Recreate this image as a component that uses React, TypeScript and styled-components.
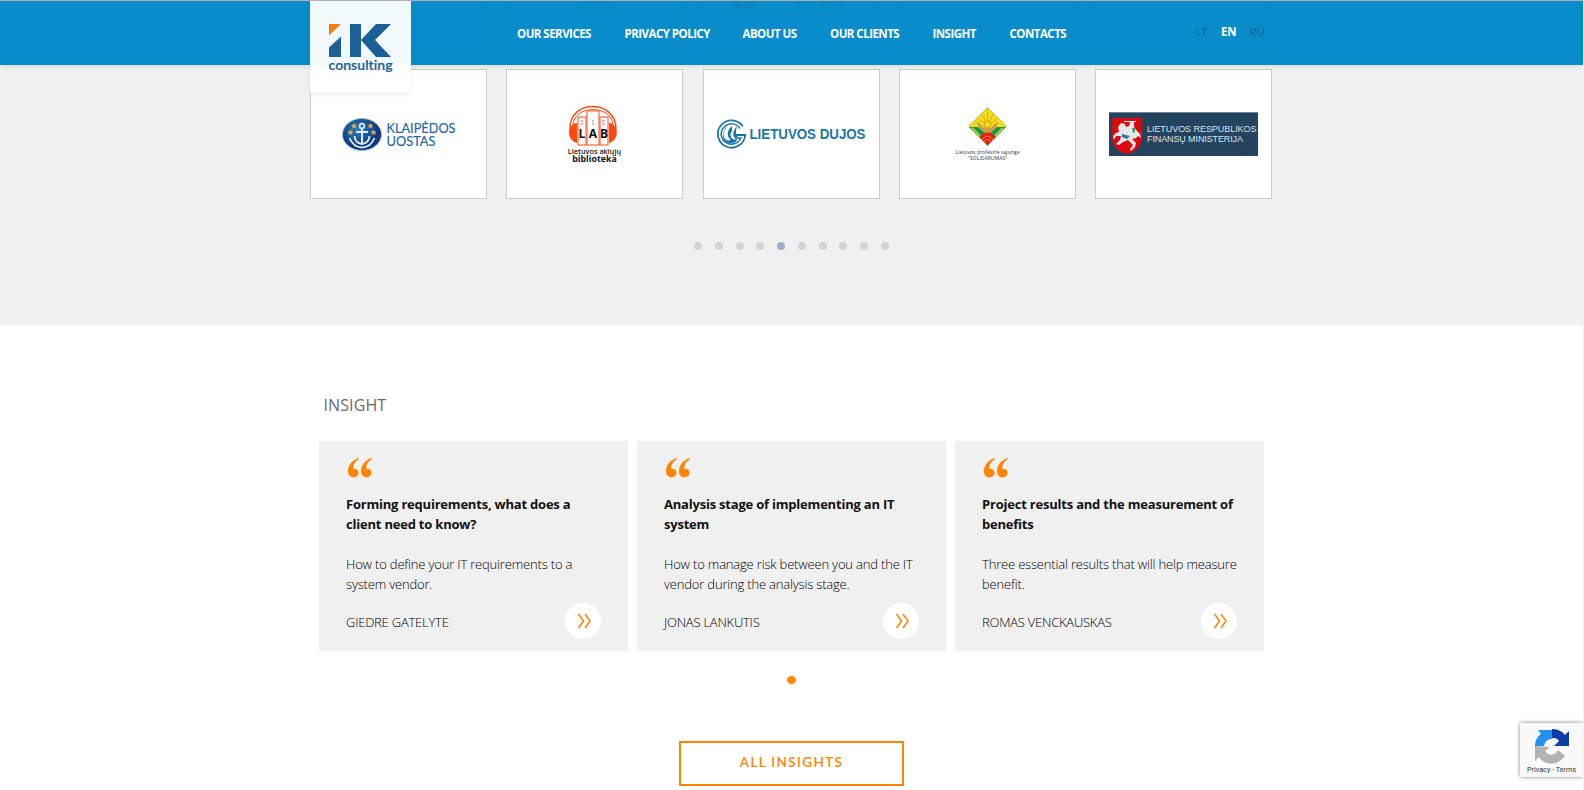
import React from "react";
import styled, { createGlobalStyle } from "styled-components";

const Global = createGlobalStyle`
  * { box-sizing: border-box; }
  body { margin: 0; background: #fff; font-family: "Open Sans", sans-serif; overflow: hidden; }
  h2, h3, p { margin: 0; }
  a { color: inherit; text-decoration: none; }
`;

const Page = styled.div`
  width: 1584px;
  height: 790px;
  overflow: hidden;
  border-top: 1px solid #b0b0b0;
  border-right: 1px solid #f1f1f1;
  display: flex;
  flex-direction: column;
`;

const Header = styled.header`
  position: relative;
  z-index: 2;
  height: 64px;
  flex: none;
  background: #098dca;
  box-shadow: 0 0 6px rgba(0, 0, 0, 0.13);
  padding-left: 310px;
  display: flex;
  align-items: flex-start;
`;

const ScrolledRow = styled.svg`
  position: absolute;
  left: 310px;
  top: 0;
  opacity: 0.06;
`;

const LogoBox = styled.a`
  position: relative;
  width: 101px;
  height: 91px;
  flex: none;
  background: linear-gradient(#f1f9fd 64px, #fff 64px);
  box-shadow: 0 2px 5px rgba(0, 0, 0, 0.07);
`;

const Nav = styled.nav`
  display: flex;
  gap: 34px;
  margin-left: 106px;
  padding-top: 23px;
  color: #fff;
  font-size: 11.5px;
  line-height: 20px;
  font-weight: 700;
  white-space: nowrap;
`;

const NavLink = styled.a<{ $w: number }>`
  width: ${(p) => p.$w}px;
  letter-spacing: -0.52px;
`;

const Languages = styled.div`
  display: flex;
  margin-left: 130px;
  padding-top: 21px;
  font-size: 11.5px;
  line-height: 20px;
`;

const Language = styled.a<{ $active?: boolean; $w: number }>`
  width: ${(p) => p.$w}px;
  letter-spacing: -0.1px;
  color: ${(p) => (p.$active ? "#fff" : "#1c5f9c")};
  font-weight: ${(p) => (p.$active ? 700 : 400)};
`;

const Clients = styled.section`
  height: 260px;
  flex: none;
  background: #f0f0f0;
  padding: 4px 0 0 310px;
`;

const ClientRow = styled.div`
  display: grid;
  grid-template-columns: repeat(5, 177px);
  gap: 19.25px;
`;

const ClientCard = styled.div`
  height: 130px;
  background: #fff;
  border: 1px solid #ccc;
  svg { display: block; }
`;

const Dots = styled.div`
  display: flex;
  gap: 12.75px;
  margin: 43px 0 0 384px;
`;

const Dot = styled.span<{ $active?: boolean }>`
  width: 8px;
  height: 8px;
  border-radius: 50%;
  background: ${(p) => (p.$active ? "#a0aecb" : "#d3d3d3")};
`;

const Insights = styled.section`
  display: flex;
  flex-direction: column;
  padding: 67px 0 0 319px;
`;

const Heading = styled.h2`
  font-size: 16px;
  line-height: 26px;
  font-weight: 400;
  color: #6a6a6a;
  padding-left: 4.5px;
  letter-spacing: 0.1px;
`;

const InsightRow = styled.div`
  display: grid;
  grid-template-columns: repeat(3, 309px);
  gap: 9px;
  margin-top: 23px;
`;

const Card = styled.article`
  height: 210px;
  background: #f0f0f0;
  padding: 17px 27px 0;
  font-size: 13px;
  line-height: 20px;
  color: #111;
`;

const QuoteIcon = styled.svg`
  display: block;
  margin-left: 2.4px;
`;

const CardTitle = styled.h3`
  font-size: 13px;
  font-weight: 700;
  letter-spacing: -0.21px;
  height: 40px;
  margin-top: 16px;
  white-space: nowrap;
`;

const CardText = styled.p`
  font-weight: 300;
  color: #000;
  letter-spacing: -0.18px;
  height: 40px;
  margin-top: 20px;
  white-space: nowrap;
`;

const CardFooter = styled.div`
  display: flex;
  justify-content: space-between;
  align-items: center;
  height: 36px;
  margin-top: 9px;
  font-weight: 300;
  color: #000;
`;

const Author = styled.span`
  letter-spacing: -0.23px;
  padding-top: 2px;
`;

const More = styled.a`
  width: 36px;
  height: 36px;
  border-radius: 50%;
  background: #fff;
  display: flex;
  align-items: center;
  justify-content: center;
`;

const Pager = styled.span`
  width: 9px;
  height: 8px;
  border-radius: 50%;
  background: #ff8400;
  margin: 25px 0 0 468px;
`;

const AllButton = styled.a`
  width: 225px;
  height: 45px;
  margin: 57px 0 0 360px;
  border: 2px solid #ff8400;
  color: #ff8400;
  font: 600 13.5px/38px Lato, sans-serif;
  letter-spacing: 1.35px;
  text-align: center;
`;

const Captcha = styled.aside`
  position: absolute;
  left: 1520px;
  top: 723px;
  width: 63px;
  height: 54px;
  background: #f9f9f9;
  border-radius: 2px 0 0 2px;
  box-shadow: 0 0 4px #808080;
  clip-path: inset(-8px 0 -8px -8px);
`;

const Logo = () => (
  <svg width="101" height="91" viewBox="0 0 101 91">
    <path d="M19 23H31L19 34.5Z" fill="#f08010" />
    <path d="M31 35.5V56H19V46.5ZM40 23H51V56H40ZM51 39 66 23H81L65 39 81 56H66Z" fill="#1c6098" />
    <text x="18.5" y="69" fontFamily="Lato" fontWeight="600" fontSize="14" fill="#1c6098" stroke="#1c6098" strokeWidth=".2" textLength="64" style={{ fontVariantLigatures: "none" }}>consulting</text>
  </svg>
);

const HiddenClients = () => (
  <ScrolledRow width="963" height="50" viewBox="0 0 963 50">
    <g fill="none" stroke="#333">
      {[0, 196, 393, 589, 785].map((x) => <path key={x} d={`M${x + 0.5} 0V49.500H${x + 176.5}V0`} strokeWidth=".6" />)}
      <path d="M424 0C427 8 441 8 446 0" strokeWidth="5" />
    </g>
    <g fill="#111" fontFamily="Liberation Sans">
      <text x="271" y="9.500" fontSize="7" textLength="29">CENTRAS</text>
      <text x="483" y="3" fontSize="18" fontWeight="700" textLength="50">LCVA</text>
      <text x="423" y="15" fontSize="5" textLength="113">LIETUVOS CENTRINIS VALSTYBĖS ARCHYVAS</text>
    </g>
  </ScrolledRow>
);

const star = (x: number, y: number) => (
  <path key={`${x}-${y}`} transform={`translate(${x} ${y})`} fill="#f2b34a" stroke="#f2b34a" strokeWidth=".5" d="M0-2.5.7-.8 2.5-.8 1.1.4 1.6 2.2 0 1.1-1.6 2.2-1.1.4-2.5-.8-.7-.8Z" />
);

const Klaipeda = () => (
  <svg width="175" height="128" viewBox="0 0 175 128">
    <defs>
      <radialGradient id="port" cx=".4" cy=".35"><stop offset="0" stopColor="#2f7fc0" /><stop offset="1" stopColor="#0c3a7c" /></radialGradient>
    </defs>
    <ellipse cx="51" cy="64.5" rx="19.5" ry="16" fill="url(#port)" stroke="#9ab8d6" />
    <g fill="none" stroke="#dfe9f3" strokeWidth="2">
      <circle cx="51" cy="56" r="2.4" strokeWidth="1.6" />
      <path d="M51 59V74M45 62H57M43.5 66Q44 73 51 74Q58 73 58.5 66" />
      <path d="M38.5 68Q42 77 51 77.500Q60 77 63.500 68" strokeWidth="1.8" />
    </g>
    {[[43, 56], [59.5, 56], [39.5, 62.5], [62.5, 62.5]].map(([x, y]) => star(x, y))}
    <g fontFamily="Lato" fontSize="13" fill="#1d64a8" stroke="#1d64a8" strokeWidth=".15">
      <text x="75.500" y="63" textLength="69" lengthAdjust="spacingAndGlyphs">KLAIPĖDOS</text>
      <text x="75.500" y="76" textLength="49" lengthAdjust="spacingAndGlyphs">UOSTAS</text>
    </g>
  </svg>
);

const Library = () => (
  <svg width="175" height="128" viewBox="0 0 175 128">
    <g fill="none" stroke="#fa4a12">
      <path d="M63 59C62 29 109 29 109 59" strokeWidth="1.4" />
      <path d="M66 55C67 34.500 105 34.500 106 55" />
    </g>
    <path d="M70 53C60 54 59 70 70 73ZM102 53C112 54 113 70 102 73Z" fill="#fa4a12" />
    <g fill="#fff" stroke="#fa6a3c" strokeWidth="1.200">
      <rect x="71" y="47" width="8" height="28" /><rect x="80" y="41" width="12" height="34" /><rect x="93" y="47" width="8" height="28" />
    </g>
    <path d="M73.500 51h3M73.500 54h3M85 51h2M85 54h2M95 51h3M95 54h3" stroke="#888" />
    <g fontFamily="Open Sans" fontWeight="700" fill="#111" textAnchor="middle">
      <text x="75" y="68" fontSize="12">L</text><text x="86" y="68" fontSize="12">A</text><text x="97" y="68" fontSize="12">B</text>
      <text fontSize="7.300">
        <tspan x="87.500" y="84" fontWeight="600">Lietuvos aklųjų</tspan>
        <tspan x="87.500" y="92" fontSize="8.800">biblioteka</tspan>
      </text>
    </g>
  </svg>
);

const Dujos = () => (
  <svg width="175" height="128" viewBox="0 0 175 128">
    <g fill="none" stroke="#1c75a8">
      <path d="M38.800 56.200A13.700 13.700 0 1 0 41.200 65H31" strokeWidth="1.800" />
      <path d="M36 58.500A10.200 10.200 0 1 0 36.800 68H31" strokeWidth="1.500" />
    </g>
    <path d="M28 56C22 61 23 67 27 70C22 72 18 67 20 62C21 59 23 58 23 56C19 61 17 67 21 71C26 75 33 73 33 69C27 71 25 65 28 61ZM33 56C29 61 28 65 31 68L34 67C31 64 32 60 33 56Z" fill="#1c75a8" />
    <text x="45.500" y="69" fontFamily="Liberation Sans" fontWeight="700" fontSize="14" fill="#1c75a8" textLength="116" lengthAdjust="spacingAndGlyphs">LIETUVOS DUJOS</text>
  </svg>
);

const Solidarumas = () => (
  <svg width="175" height="128" viewBox="0 0 175 128">
    <defs><clipPath id="diamond"><path d="M87.500 37.500 106.500 56.500 87.500 75.500 68.500 56.500Z" /></clipPath></defs>
    <g clipPath="url(#diamond)">
      <path d="M68 37H107V76H68Z" fill="#f4dc17" />
      <path d="M87.500 55V38M87.500 55 81 42M87.500 55 94 42M87.500 55 75 47M87.500 55 100 47" stroke="#d2a61c" strokeWidth=".8" />
      <path d="M66 57H78L87.500 65 97 57H109V76H66Z" fill="#169447" />
      <path d="M72 58 80 66M103 58 95 66" stroke="#a4d44c" strokeWidth="2" />
      <path d="M77 51C78 60 84 62 87.500 64C91 62 97 60 98 51L91 58H84Z" fill="#ca9b4b" />
      <circle cx="87.500" cy="54.500" r="3.500" fill="#f4dc17" stroke="#c59d20" />
      <circle cx="87.500" cy="71" r="8.500" fill="#eb1c13" />
      <path d="M82 70Q87.500 62 93 70M84 72Q87.500 67 91 72" fill="none" stroke="#f59132" />
    </g>
    <path d="M87.500 37.500 106.500 56.500 87.500 75.500 68.500 56.500Z" fill="none" stroke="#ba9b45" strokeWidth=".6" />
    <g fontFamily="Open Sans" fontSize="5" fill="#333" textAnchor="middle">
      <text x="87.500" y="83.500" textLength="64">Lietuvos profesinė sąjunga</text>
      <text x="87.500" y="89.500" textLength="39">"SOLIDARUMAS"</text>
    </g>
  </svg>
);

const Ministry = () => (
  <svg width="175" height="128" viewBox="0 0 175 128">
    <path d="M13 42H162V86H13Z" fill="#24435f" />
    <path d="M13 42.500H162" stroke="#71869a" />
    <path d="M16 48H46V66C46 77 39 82 31 84C23 82 16 77 16 66Z" fill="#dc080c" stroke="#8c2435" strokeWidth=".6" />
    <path d="M22 57 25 53 29 54 30 57 33 56 34 52H38L38 57 41 61 44 64 45 68 42 66 40 68 36 69 40 73 39 77 35 81 34 79 37 75 32 70 27 72 23 75 20 74 24 70 25 66 20 66 18 70 17 66 20 63 23 62Z" fill="#e4e7e9" />
    <path d="M28 51.500H40" stroke="#eee" />
    <path d="M26 64 34 66 31 69 26 67Z" fill="#367796" /><path d="M36 58H39V62L37 63Z" fill="#3e9b63" />
    <g fontFamily="Liberation Sans" fontSize="9" fill="#dce3e9">
      <text x="51" y="61.500" textLength="109.500">LIETUVOS RESPUBLIKOS</text>
      <text x="51" y="71.800" textLength="96">FINANSŲ MINISTERIJA</text>
    </g>
  </svg>
);

const navItems: [string, number][] = [["OUR SERVICES", 73.5], ["PRIVACY POLICY", 84], ["ABOUT US", 53.5], ["OUR CLIENTS", 68.5], ["INSIGHT", 43], ["CONTACTS", 56]];
const cards = [
  { title: ["Forming requirements, what does a", "client need to know?"], text: ["How to define your IT requirements to a", "system vendor."], author: "GIEDRE GATELYTE" },
  { title: ["Analysis stage of implementing an IT", "system"], text: ["How to manage risk between you and the IT", "vendor during the analysis stage."], author: "JONAS LANKUTIS" },
  { title: ["Project results and the measurement of", "benefits"], text: ["Three essential results that will help measure", "benefit."], author: "ROMAS VENCKAUSKAS" },
];

export default function App() {
  return (
    <Page>
      <Global />
      <Header>
        <HiddenClients />
        <LogoBox><Logo /></LogoBox>
        <Nav>{navItems.map(([n, w]) => <NavLink key={n} $w={w}>{n}</NavLink>)}</Nav>
        <Languages>
          <Language $w={25.5}>LT</Language>
          <Language $w={28.5} $active>EN</Language>
          <Language $w={20}>RU</Language>
        </Languages>
      </Header>
      <Clients>
        <ClientRow>
          <ClientCard><Klaipeda /></ClientCard>
          <ClientCard><Library /></ClientCard>
          <ClientCard><Dujos /></ClientCard>
          <ClientCard><Solidarumas /></ClientCard>
          <ClientCard><Ministry /></ClientCard>
        </ClientRow>
        <Dots>{Array.from({ length: 10 }, (_, i) => <Dot key={i} $active={i === 4} />)}</Dots>
      </Clients>
      <Insights>
        <Heading>INSIGHT</Heading>
        <InsightRow>
          {cards.map((c) => (
            <Card key={c.author}>
              <QuoteIcon width="24" height="20" viewBox="0 0 24 20">
                <g fill="#ff8400">
                  <path d="M10.500 0C4 2.300 0 7.300 0 13C0 17 2.300 19.300 5.500 19.300C8.500 19.300 10.500 17.300 10.500 14.700C10.500 12 8.500 10.500 5.200 10.700C5 6.500 7 3.500 10.800 1.300Z" />
                  <path d="M23.500 0C17 2.300 13 7.300 13 13C13 17 15.300 19.300 18.500 19.300C21.500 19.300 23.500 17.300 23.500 14.700C23.500 12 21.500 10.500 18.200 10.700C18 6.500 20 3.500 23.800 1.300Z" />
                </g>
              </QuoteIcon>
              <CardTitle>{c.title[0]}<br />{c.title[1]}</CardTitle>
              <CardText>{c.text[0]}<br />{c.text[1]}</CardText>
              <CardFooter>
                <Author>{c.author}</Author>
                <More>
                  <svg width="36" height="36" viewBox="0 0 36 36" fill="none" stroke="#ff8400" strokeWidth="1.500">
                    <path d="M13.500 11 18.500 18 13.500 25M20 11 25 18 20 25" />
                  </svg>
                </More>
              </CardFooter>
            </Card>
          ))}
        </InsightRow>
        <Pager />
        <AllButton>ALL INSIGHTS</AllButton>
      </Insights>
      <Captcha>
        <svg width="63" height="54" viewBox="0 0 63 54">
          <path d="M15 23C15 17 18 13 21 11L18 7H32V16C27 16 25 19 24 23Z" fill="#2490ee" />
          <path d="M32 6C38 6 43 9 45 12L49 8V23H34L39 18C37 15 35 15 32 15Z" fill="#0b3ca9" />
          <path d="M15 23 30 24 25 28C29 34 36 32 38 27L45 33C36 45 23 41 19 34L15 38Z" fill="#b2b2b2" />
          <text x="7" y="49" fontFamily="Roboto" fontSize="7.200" fill="#333" textLength="49">Privacy - Terms</text>
        </svg>
      </Captcha>
    </Page>
  );
}
